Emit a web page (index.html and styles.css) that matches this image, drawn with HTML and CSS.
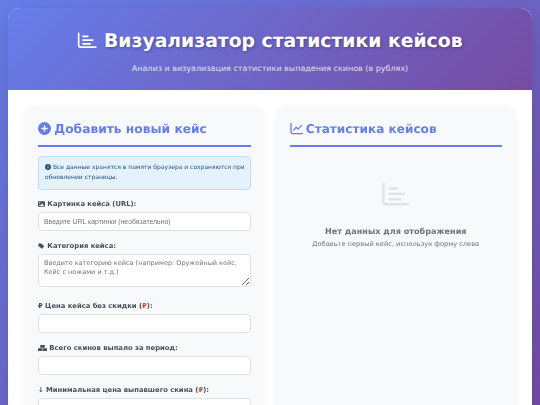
FILE: index.html
```html
<!DOCTYPE html>
<html lang="ru">
<head>
    <meta charset="UTF-8">
    <meta name="viewport" content="width=device-width, initial-scale=1.0">
    <title>Визуализатор статистики кейсов</title>
    <link rel="stylesheet" href="styles.css">
</head>
<body>
    <div class="container">
        <header class="header">
            <h1>
                <svg class="title-icon" viewBox="0 0 24 20"><path d="M2 1.5V15.5a2.5 2.5 0 0 0 2.5 2.5H22.5" fill="none" stroke="currentColor" stroke-width="2" stroke-linecap="round"/><path d="M7 5H13M7 9.5H19M7 14H16" fill="none" stroke="currentColor" stroke-width="2" stroke-linecap="round"/></svg>
                Визуализатор статистики кейсов
            </h1>
            <p>Анализ и визуализация статистики выпадения скинов (в рублях)</p>
        </header>
        <main class="content">
            <section class="card">
                <h2>
                    <svg class="head-icon" viewBox="0 0 20 20"><circle cx="10" cy="10" r="10" fill="currentColor"/><path d="M10 6v8M6 10h8" stroke="#f8f9fa" stroke-width="2.2" stroke-linecap="round"/></svg>
                    Добавить новый кейс
                </h2>
                <div class="info-box">
                    <svg class="info-icon" viewBox="0 0 20 20"><circle cx="10" cy="10" r="10" fill="#2c5282"/><path d="M10 9v5.5" stroke="#e3f2fd" stroke-width="2.6"/><circle cx="10" cy="5.8" r="1.6" fill="#e3f2fd"/></svg>
                    Все данные хранятся в памяти браузера и сохраняются при обновлении страницы.
                </div>
                <div class="field">
                    <label><svg class="label-icon" viewBox="0 0 20 16"><path fill-rule="evenodd" d="M2 0h16a2 2 0 0 1 2 2v12a2 2 0 0 1-2 2H2a2 2 0 0 1-2-2V2a2 2 0 0 1 2-2zm3 3a2 2 0 1 0 0 4 2 2 0 0 0 0-4zm7 3-4 6-2-2-3 4h14z" fill="currentColor"/></svg> Картинка кейса (URL):</label>
                    <input type="text" class="url-input" placeholder="Введите URL картинки (необязательно)">
                </div>
                <div class="field">
                    <label><svg class="label-icon" viewBox="0 0 20 16"><path d="M1 1h8l9 8-6.5 6.5L1 8z" fill="currentColor"/></svg> Категория кейса:</label>
                    <textarea placeholder="Введите категорию кейса (например: Оружейный кейс, Кейс с ножами и т.д.)"></textarea>
                </div>
                <div class="field">
                    <label>₽ Цена кейса без скидки (<span class="rub">₽</span>):</label>
                    <input type="text">
                </div>
                <div class="field">
                    <label><svg class="label-icon boxes" viewBox="0 0 20 13"><path d="M5 0h10v6H5zM0 7h9.5v6H0zM10.5 7H20v6h-9.5z" fill="currentColor"/></svg> Всего скинов выпало за период:</label>
                    <input type="text">
                </div>
                <div class="field">
                    <label>↓ Минимальная цена выпавшего скина (<span class="rub">₽</span>):</label>
                    <input type="text">
                </div>
            </section>
            <section class="card">
                <h2>
                    <svg class="head-icon" viewBox="0 0 20 20"><path d="M1.5 2v13.5a2.5 2.5 0 0 0 2.5 2.5H19" fill="none" stroke="currentColor" stroke-width="2" stroke-linecap="round"/><path d="M5.5 12.5 9.5 8l3 3 5-5.5" fill="none" stroke="currentColor" stroke-width="2" stroke-linecap="round" stroke-linejoin="round"/></svg>
                    <span class="narrow">Статистика кейсов</span>
                </h2>
                <div class="empty">
                    <svg class="empty-icon" viewBox="0 0 24 20"><path d="M2 1.5V15.5a2.5 2.5 0 0 0 2.5 2.5H22.5" fill="none" stroke="currentColor" stroke-width="2" stroke-linecap="round"/><path d="M7 5H13M7 9.5H19M7 14H16" fill="none" stroke="currentColor" stroke-width="2" stroke-linecap="round"/></svg>
                    <h3>Нет данных для отображения</h3>
                    <p>Добавьте первый кейс, используя форму слева</p>
                </div>
            </section>
        </main>
    </div>
</body>
</html>
```

FILE: styles.css
```css
*{
    margin: 0;
    padding: 0;
    box-sizing: border-box;
}
html{
    overflow: hidden;
}
body{
    font-family: "DejaVu Sans", sans-serif;
    text-rendering: geometricPrecision;
    background: linear-gradient(135deg, #667eea 0%, #764ba2 100%);
    padding: 8px;
    min-height: 100vh;
    color: #333;
}
.container{
    background: #ffffff;
    border-radius: 12px;
    overflow: hidden;
    box-shadow: 0 8px 24px rgba(0, 0, 0, 0.15);
}
.header{
    height: 82px;
    padding-top: 21px;
    text-align: center;
    color: #ffffff;
    background: linear-gradient(135deg, #667eea 0%, #764ba2 100%);
}
.header h1{
    font-size: 18.8px;
    line-height: 26px;
    font-weight: 700;
    text-shadow: 1px 1px 3px rgba(0, 0, 0, 0.3);
}
.title-icon{
    width: 20px;
    height: 17px;
    vertical-align: -2px;
}
.header p{
    margin-top: 8px;
    font-size: 8px;
    line-height: 11px;
    opacity: 0.8;
}
.content{
    display: grid;
    grid-template-columns: 1fr 1fr;
    gap: 11px;
    padding: 16px;
    will-change: transform;
}
.card{
    background: #f8f9fa;
    border-radius: 10px;
    padding: 14px;
    box-shadow: 0 2px 6px rgba(0, 0, 0, 0.04);
}
.card h2{
    color: #667eea;
    font-size: 12.25px;
    line-height: 18px;
    font-weight: 700;
    padding-bottom: 7px;
    margin-bottom: 9px;
    border-bottom: 2px solid #667eea;
}
.head-icon{
    width: 13px;
    height: 13px;
    vertical-align: -2px;
    margin-right: -1px;
}
.narrow{
    font-size: 12.1px;
}
.info-box{
    background: #e3f2fd;
    border: 1px solid #bbdefb;
    border-radius: 4px;
    padding: 6px 3px 6px 6px;
    margin-bottom: 9px;
    font-size: 6px;
    line-height: 10px;
    color: #2c5282;
}
.info-icon{
    width: 6px;
    height: 6px;
    vertical-align: -0.5px;
}
.field{
    margin-bottom: 10px;
}
.field label{
    display: block;
    font-size: 6.8px;
    line-height: 10px;
    font-weight: 700;
    color: #495057;
    margin-bottom: 3px;
}
.label-icon{
    width: 7px;
    height: 6px;
    vertical-align: -0.5px;
}
.label-icon.boxes{
    width: 9px;
}
.rub{
    color: #e74c3c;
}
input, textarea{
    display: block;
    width: 100%;
    height: 19px;
    padding: 0 5px;
    background: #ffffff;
    border: 1px solid #dee2e6;
    border-radius: 4px;
    font-size: 6.9px;
}
input::placeholder, textarea::placeholder{
    color: #757575;
}
.url-input{
    font-family: "Liberation Sans", sans-serif;
}
textarea{
    height: 33px;
    margin-bottom: 14px;
    padding: 4px 5px;
    font-family: "DejaVu Sans", sans-serif;
    font-size: 6.5px;
    line-height: 9px;
}
.empty{
    padding-top: 26px;
    text-align: center;
    color: #6c757d;
}
.empty-icon{
    display: block;
    width: 29px;
    height: 25px;
    margin: 0 auto 19px;
    color: #dee2e6;
}
.empty h3{
    font-size: 8.1px;
    line-height: 11px;
    font-weight: 700;
    margin-bottom: 2px;
}
.empty p{
    font-size: 6.65px;
    line-height: 10px;
}
```
